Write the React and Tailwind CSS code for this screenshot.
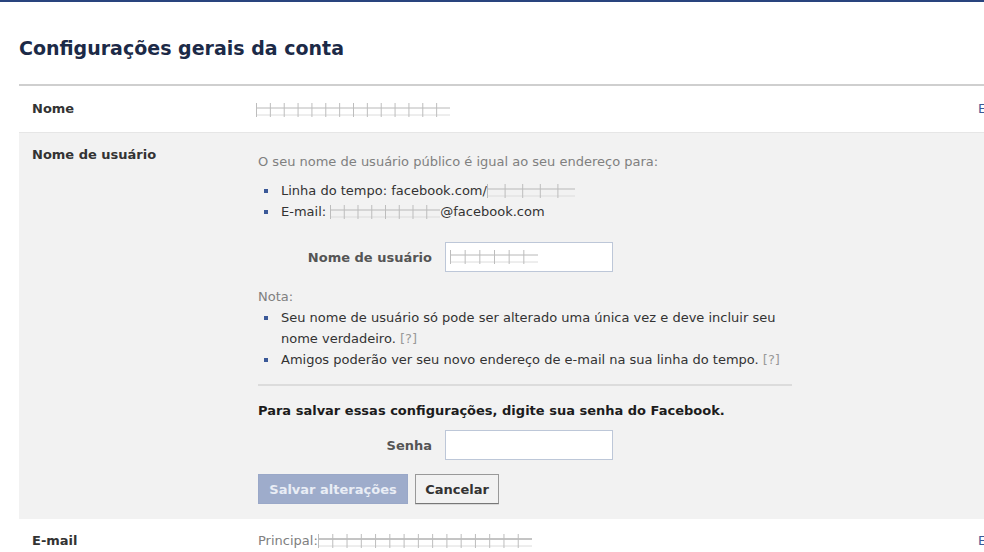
import React from "react";

const font = { fontFamily: '"DejaVu Sans", Verdana, sans-serif' };

function Scribble({ width, ticks, dark }) {
  const step = width / ticks;
  return (
    <svg width={width} height="14" className="inline-block align-[-3px]">
      <line x1="0" y1="5" x2={width} y2="5" stroke={dark ? "#8a8a8a" : "#b8b8b8"} strokeWidth="1" />
      <line x1="0" y1="12" x2={width} y2="12" stroke="#dcdcdc" strokeWidth="1" />
      {Array.from({ length: ticks + 1 }).map((_, i) => (
        <line key={i} x1={i * step + 0.5} y1="0" x2={i * step + 0.5} y2="14" stroke="#bdbdbd" strokeWidth="1" />
      ))}
    </svg>
  );
}

function Bullet({ children }) {
  return (
    <li className="flex items-start">
      <span className="mt-[9px] ml-[6px] mr-[13px] h-[4px] w-[4px] shrink-0 bg-[#3b5998]" />
      <span>{children}</span>
    </li>
  );
}

export default function App() {
  return (
    <div className="w-[984px] h-[552px] overflow-hidden bg-white text-[#333]" style={font}>
      <div className="h-[2px] bg-[#29447e]" />
      <div className="pl-[19px]">
        <h1 className="pt-[31px] pb-[21px] text-[19px] font-bold leading-[30px] text-[#1c2a47]">
          Configurações gerais da conta
        </h1>
        <div className="border-t-2 border-[#cfcfcf]">
          <div className="flex h-[46px] items-center">
            <div className="w-[237px] pl-[13px] text-[13px] font-bold">Nome</div>
            <div className="flex-1"><Scribble width={194} ticks={14} /></div>
            <div className="w-[6px] overflow-visible whitespace-nowrap text-[13px] text-[#3b5998]">Editar</div>
          </div>

          <div className="flex border-t border-[#e6e6e6] bg-[#f2f2f2] pb-[15px]">
            <div className="w-[239px] pl-[13px] pt-[12px] text-[13px] font-bold">Nome de usuário</div>
            <div className="flex-1 pt-[18px] text-[13px] leading-[21px]">
              <p className="text-[#808080]">O seu nome de usuário público é igual ao seu endereço para:</p>
              <ul className="mt-[8px]">
                <Bullet>
                  Linha do tempo: facebook.com/<Scribble width={88} ticks={5} />
                </Bullet>
                <Bullet>
                  E-mail: <Scribble width={110} ticks={8} />@facebook.com
                </Bullet>
              </ul>
              <div className="mt-[20px] flex items-center">
                <label className="w-[187px] pr-[13px] text-right text-[13px] font-bold text-[#555]">Nome de usuário</label>
                <div className="flex h-[30px] w-[168px] items-center border border-[#bdc7d8] bg-white pl-[4px]">
                  <Scribble width={88} ticks={6} />
                </div>
              </div>
              <p className="mt-[14px] text-[#808080]">Nota:</p>
              <ul>
                <Bullet>
                  Seu nome de usuário só pode ser alterado uma única vez e deve incluir seu
                  <br />
                  nome verdadeiro. <span className="text-[#999]">[?]</span>
                </Bullet>
                <Bullet>
                  Amigos poderão ver seu novo endereço de e-mail na sua linha do tempo. <span className="text-[#999]">[?]</span>
                </Bullet>
              </ul>
              <div className="mt-[14px] mr-[192px] border-t-2 border-[#dcdcdc]" />
              <p className="mt-[14px] text-[13px] font-bold text-[#1c1c1c]">
                Para salvar essas configurações, digite sua senha do Facebook.
              </p>
              <div className="mt-[9px] flex items-center">
                <label className="w-[187px] pr-[13px] text-right text-[13px] font-bold text-[#555]">Senha</label>
                <input type="password" className="h-[30px] w-[168px] border border-[#bdc7d8] bg-white outline-none" />
              </div>
              <div className="mt-[14px] flex items-center gap-[7px]">
                <button className="h-[30px] w-[150px] border border-[#9aa8c8] bg-[#9eaccb] text-[13px] font-bold text-[#e9edf5]">
                  Salvar alterações
                </button>
                <button className="h-[30px] w-[84px] border border-[#999] border-b-[#777] bg-[#f2f2f2] text-[13px] font-bold text-[#333] shadow-[0_1px_0_rgba(0,0,0,0.1)]">
                  Cancelar
                </button>
              </div>
            </div>
          </div>

          <div className="flex h-[44px] items-center">
            <div className="w-[239px] pl-[13px] text-[13px] font-bold">E-mail</div>
            <div className="flex flex-1 items-center text-[13px] text-[#808080]">
              Principal:<Scribble width={214} ticks={15} dark />
            </div>
            <div className="w-[6px] overflow-visible whitespace-nowrap text-[13px] text-[#3b5998]">Editar</div>
          </div>
        </div>
      </div>
    </div>
  );
}
